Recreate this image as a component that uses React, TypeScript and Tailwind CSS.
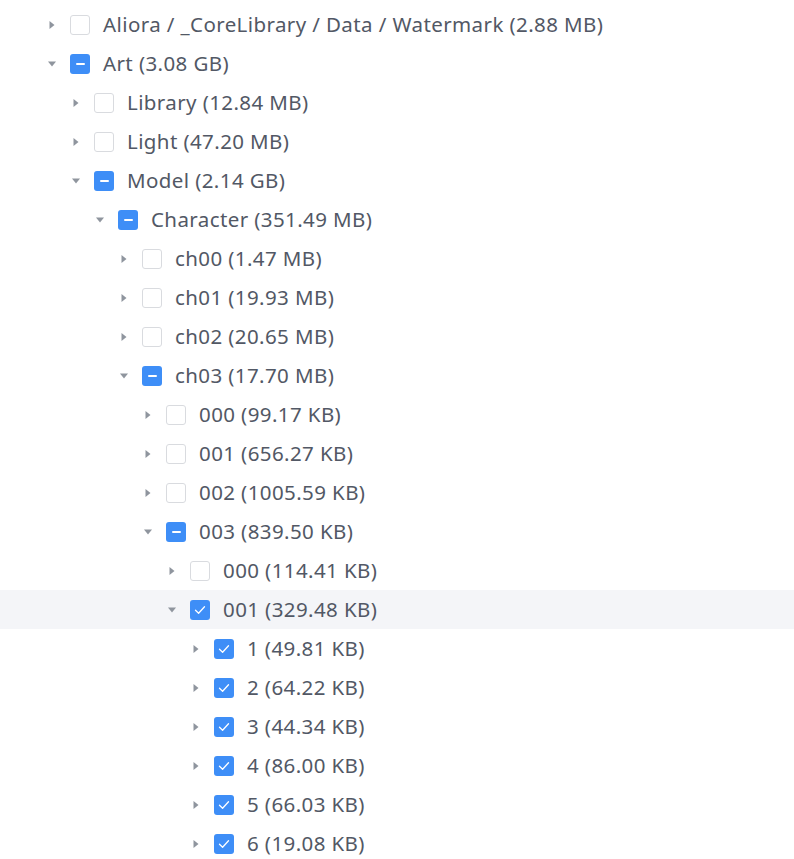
import React from 'react'

type CheckState = 'none' | 'some' | 'all'

interface Node {
  label: string
  level: number
  open: boolean
  state: CheckState
  hover?: boolean
}

const ROWS: Node[] = [
  { label: 'Aliora / _CoreLibrary / Data / Watermark (2.88 MB)', level: 0, open: false, state: 'none' },
  { label: 'Art (3.08 GB)', level: 0, open: true, state: 'some' },
  { label: 'Library (12.84 MB)', level: 1, open: false, state: 'none' },
  { label: 'Light (47.20 MB)', level: 1, open: false, state: 'none' },
  { label: 'Model (2.14 GB)', level: 1, open: true, state: 'some' },
  { label: 'Character (351.49 MB)', level: 2, open: true, state: 'some' },
  { label: 'ch00 (1.47 MB)', level: 3, open: false, state: 'none' },
  { label: 'ch01 (19.93 MB)', level: 3, open: false, state: 'none' },
  { label: 'ch02 (20.65 MB)', level: 3, open: false, state: 'none' },
  { label: 'ch03 (17.70 MB)', level: 3, open: true, state: 'some' },
  { label: '000 (99.17 KB)', level: 4, open: false, state: 'none' },
  { label: '001 (656.27 KB)', level: 4, open: false, state: 'none' },
  { label: '002 (1005.59 KB)', level: 4, open: false, state: 'none' },
  { label: '003 (839.50 KB)', level: 4, open: true, state: 'some' },
  { label: '000 (114.41 KB)', level: 5, open: false, state: 'none' },
  { label: '001 (329.48 KB)', level: 5, open: true, state: 'all', hover: true },
  { label: '1 (49.81 KB)', level: 6, open: false, state: 'all' },
  { label: '2 (64.22 KB)', level: 6, open: false, state: 'all' },
  { label: '3 (44.34 KB)', level: 6, open: false, state: 'all' },
  { label: '4 (86.00 KB)', level: 6, open: false, state: 'all' },
  { label: '5 (66.03 KB)', level: 6, open: false, state: 'all' },
  { label: '6 (19.08 KB)', level: 6, open: false, state: 'all' },
]

function Arrow({ open }: { open: boolean }) {
  return (
    <span className="w-6 h-6 flex items-center justify-center shrink-0">
      {open ? (
        <svg width="10" height="6" viewBox="0 0 10 6">
          <path d="M1 0.5 L9 0.5 L5 5.5 Z" fill="#8f959e" />
        </svg>
      ) : (
        <svg width="6" height="10" viewBox="0 0 6 10">
          <path d="M0.5 1 L5.5 5 L0.5 9 Z" fill="#8f959e" />
        </svg>
      )}
    </span>
  )
}

function Box({ state }: { state: CheckState }) {
  if (state === 'none') {
    return <span className="w-5 h-5 rounded-[3px] border border-[#d9dbdf] bg-white shrink-0" />
  }
  return (
    <span className="w-5 h-5 rounded-[3px] bg-[#3e8ef7] flex items-center justify-center shrink-0">
      {state === 'some' ? (
        <span className="w-[9px] h-[2px] bg-white rounded-full" />
      ) : (
        <svg width="12" height="10" viewBox="0 0 12 10">
          <path d="M1.5 5.2 L4.6 8.2 L10.5 1.8" fill="none" stroke="white" strokeWidth="1.3" strokeLinecap="round" strokeLinejoin="round" />
        </svg>
      )}
    </span>
  )
}

export default function App() {
  return (
    <div className="w-[794px] h-[859px] overflow-hidden bg-white pt-[5px]" style={{ fontFamily: '"Noto Sans", Inter, sans-serif' }}>
      {ROWS.map((r, i) => (
        <div
          key={i}
          className={`h-[39px] flex items-center pl-10 ${r.hover ? 'bg-[#f4f5f8]' : ''}`}
        >
          <div className="flex items-center" style={{ paddingLeft: r.level * 24 }}>
            <Arrow open={r.open} />
            <span className="w-[6px]" />
            <Box state={r.state} />
            <span className="ml-[13px] text-[20.5px] tracking-[0.4px] leading-none text-[#525865] whitespace-nowrap">{r.label}</span>
          </div>
        </div>
      ))}
    </div>
  )
}
